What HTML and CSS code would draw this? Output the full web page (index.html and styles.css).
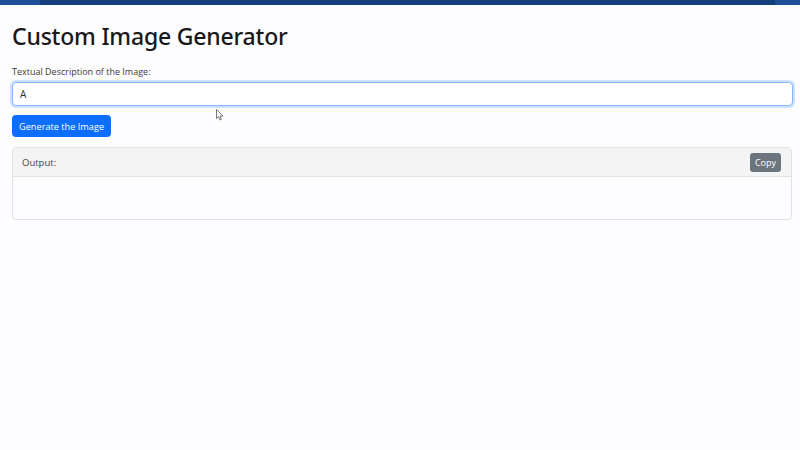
FILE: index.html
```html
<!DOCTYPE html>
<html>
<head>
<meta charset="utf-8">
<link rel="stylesheet" href="styles.css">
</head>
<body>
<div class="topbar"><div class="topbar-mid"></div></div>
<main class="container">
  <h1 class="title">Custom Image Generator</h1>
  <label class="label" for="desc">Textual Description of the Image:</label>
  <input id="desc" class="input" type="text" value="A">
  <button class="btn-primary">Generate the Image</button>
  <section class="card">
    <div class="card-header">
      <span class="card-title">Output:</span>
      <button class="btn-copy">Copy</button>
    </div>
    <div class="card-body"></div>
  </section>
</main>
<svg class="cursor" width="8" height="12" viewBox="0 0 8 12"><path d="M0.5 0.5 L0.5 9.5 L2.6 7.6 L4 11 L5.4 10.4 L4 7.1 L7 7.1 Z" fill="#fff" stroke="#555" stroke-width="0.8"/></svg>
</body>
</html>
```
FILE: styles.css
```css
* { box-sizing: border-box; }
html, body { margin: 0; padding: 0; }
body {
  background: #fdfcff;
  font-family: "Open Sans", "Noto Sans", sans-serif;
  color: #212529;
  width: 800px;
  height: 450px;
  overflow: hidden;
  position: relative;
}
.topbar {
  height: 5px;
  background: #1c4f98;
  display: flex;
  padding: 0 25px 0 40px;
}
.topbar-mid { flex: 1; background: #143f7f; }
.container {
  padding: 0 8px 0 12px;
  display: flex;
  flex-direction: column;
  align-items: flex-start;
}
.title {
  margin: 16px 0 0;
  font-family: "Noto Sans", "Open Sans", sans-serif;
  font-size: 23px;
  font-weight: 500;
  line-height: 30px;
  color: #18181b;
  letter-spacing: -0.2px;
}
.label {
  margin-top: 14px;
  font-size: 9px;
  line-height: 13px;
  color: #3a3a3d;
}
.input {
  margin-top: 4px;
  width: 781px;
  height: 24px;
  border: 1px solid #86b7fe;
  border-radius: 4px;
  box-shadow: 0 0 0 2px #cfe1fd;
  background: #fff;
  padding: 0 7px;
  font-family: inherit;
  font-size: 10px;
  color: #333;
  outline: none;
}
.btn-primary {
  margin-top: 9px;
  height: 22px;
  padding: 0 7px;
  background: #0d6efd;
  color: #fff;
  border: none;
  border-radius: 4px;
  font-family: inherit;
  font-size: 9.2px;
}
.card {
  margin-top: 10px;
  width: 780px;
  border: 1px solid #e2e2e5;
  border-radius: 4px;
  background: #fdfcff;
  overflow: hidden;
}
.card-header {
  height: 29px;
  background: #f4f4f5;
  border-bottom: 1px solid #e2e2e5;
  display: flex;
  align-items: center;
  justify-content: space-between;
  padding: 0 10px 0 9px;
}
.card-title { font-size: 9.5px; color: #444; }
.btn-copy {
  height: 19px;
  padding: 0 5px;
  background: #6c757d;
  color: #fff;
  border: none;
  border-radius: 3px;
  font-family: inherit;
  font-size: 9px;
}
.card-body { height: 42px; }
.cursor { position: absolute; left: 216px; top: 109px; }
```
